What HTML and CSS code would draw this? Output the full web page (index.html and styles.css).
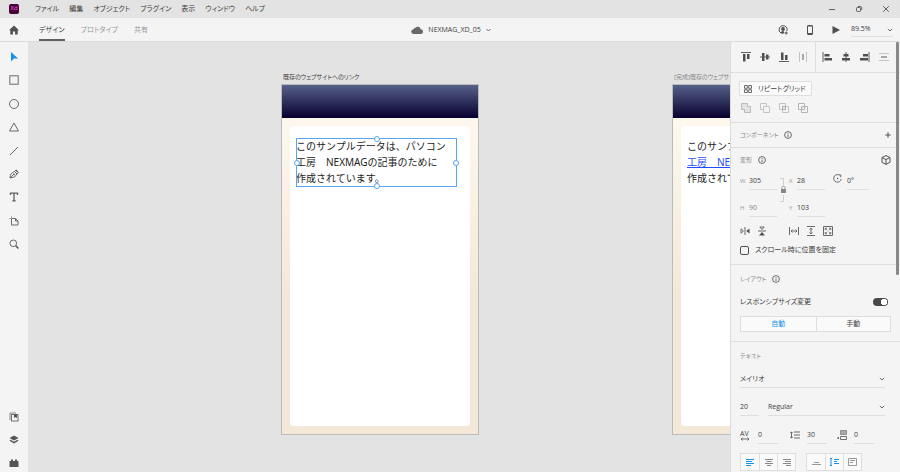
FILE: index.html
```html
<!DOCTYPE html>
<html lang="ja">
<head>
    <meta charset="UTF-8">
    <meta name="viewport" content="width=device-width, initial-scale=1.0">
    <title>NEXMAG_XD_05</title>
    <link rel="stylesheet" href="styles.css">
</head>
<body>
    <header class="titlebar">
        <span class="logo">Xd</span>
        <nav class="menu">
            <a href="#">ファイル</a>
            <a href="#">編集</a>
            <a href="#">オブジェクト</a>
            <a href="#">プラグイン</a>
            <a href="#">表示</a>
            <a href="#">ウィンドウ</a>
            <a href="#">ヘルプ</a>
        </nav>
        <div class="window-buttons">
            <button aria-label="最小化"><svg width="8" height="8" viewBox="0 0 8 8"><path d="M1 4.500h6"/></svg></button>
            <button aria-label="元に戻す"><svg width="8" height="8" viewBox="0 0 8 8"><rect x="1.500" y="2.500" width="4" height="4" rx=".8"/><path d="M3 1.500h2.500q1.200 0 1.200 1.200V5"/></svg></button>
            <button aria-label="閉じる"><svg width="8" height="8" viewBox="0 0 8 8"><path d="M1.200 1.200l5.600 5.600M6.800 1.200L1.200 6.800"/></svg></button>
        </div>
    </header>

    <div class="appbar">
        <a class="home" href="#" aria-label="ホーム"><svg width="10" height="10" viewBox="0 0 10 10"><path d="M5 .6L0 5.200h1.300V9.400h2.600V6.400h2.200v3h2.600V5.200H10z" fill="#505050"/></svg></a>
        <nav class="tabs">
            <a class="tab active" href="#">デザイン</a>
            <a class="tab" href="#">プロトタイプ</a>
            <a class="tab" href="#">共有</a>
        </nav>
        <button class="document">
            <svg width="12" height="8" viewBox="0 0 12 8"><path d="M2.600 8a2.300 2.300 0 0 1-.2-4.600A2 2 0 0 1 4.300 2 3 3 0 0 1 9.700 3.200 2.400 2.400 0 0 1 9.600 8z" fill="#686868"/></svg>
            <span>NEXMAG_XD_05</span>
            <svg width="5" height="4" viewBox="0 0 5 4"><path class="line" d="M.5 1l2 2 2-2"/></svg>
        </button>
        <div class="actions">
            <button aria-label="招待"><svg width="10" height="10" viewBox="0 0 10 10"><path d="M3.200 8.200A4 4 0 1 1 8.800 6" fill="none" stroke="#505050"/><circle cx="5" cy="4" r="1.900" fill="#505050"/><path d="M2.200 7.800q2.600-3.200 4.200-.6L5 9z" fill="#505050"/><path d="M8.200 6.500v3M6.700 8h3" stroke="#505050"/></svg></button>
            <button aria-label="モバイルプレビュー"><svg width="6" height="10" viewBox="0 0 6 10"><path d="M1 .5h4q.5 0 .5.500v8q0 .5-.5.500H1q-.5 0-.5-.5V1Q.5.500 1 .5z" fill="none" stroke="#505050"/><path d="M1 1h4M1 8.500h4" stroke="#505050"/></svg></button>
            <button aria-label="プレビュー"><svg width="8" height="8" viewBox="0 0 8 8"><path d="M.5 0L8 4 .5 8z" fill="#505050"/></svg></button>
            <div class="dropdown zoom">
                <select aria-label="ズーム"><option>89.5%</option><option>100%</option></select>
                <svg width="6" height="4" viewBox="0 0 6 4"><path class="line" d="M.8.800L3 3 5.200.8"/></svg>
            </div>
        </div>
    </div>

    <main class="workspace">
        <aside class="tools">
            <div class="tool-group drawing">
                <button aria-label="選択"><svg width="10" height="10" viewBox="0 0 10 10"><path d="M2 0l7 6.500H5L2 9.500z" fill="#1592e6"/></svg></button>
                <button aria-label="長方形"><svg width="10" height="10" viewBox="0 0 10 10"><rect class="line" x=".8" y=".8" width="8.400" height="8.400"/></svg></button>
                <button aria-label="楕円形"><svg width="10" height="10" viewBox="0 0 10 10"><circle class="line" cx="5" cy="5" r="4.500"/></svg></button>
                <button aria-label="多角形"><svg width="10" height="10" viewBox="0 0 10 10"><path class="line" d="M5 1l4.500 8h-9z"/></svg></button>
                <button aria-label="線"><svg width="10" height="10" viewBox="0 0 10 10"><path class="line" d="M1 9l8-8"/></svg></button>
                <button aria-label="ペン"><svg width="10" height="10" viewBox="0 0 10 10"><path class="line" d="M1 9q0-5 4.500-6.500L8 5Q6.500 9 1 9zM1 9l3.500-3.500M5.500 2.500L7 1l2.500 2.500L8 5"/><path d="M6.500 1.500l2 2 1 0L7.500.5z" fill="#505050"/><circle cx="5" cy="5.300" r=".9" fill="#505050"/></svg></button>
                <button aria-label="テキスト"><svg width="10" height="10" viewBox="0 0 10 10"><path d="M1.500 3V1.200h7V3M5 1.200v7.600M3.300 8.800h3.400" fill="none" stroke="#606060" stroke-width="1.300"/></svg></button>
                <button aria-label="アートボード"><svg width="10" height="10" viewBox="0 0 10 10"><path class="line" d="M2.500 2.500V9H9V5L6.500 2.500zM6.500 2.500V5H9"/><path d="M0 2.500h2.500V0" fill="none" stroke="#aaa"/></svg></button>
                <button aria-label="ズーム"><svg width="10" height="10" viewBox="0 0 10 10"><circle class="line" cx="4.300" cy="4.300" r="3.300"/><path d="M6.800 6.800L9.400 9.400" stroke="#505050" stroke-width="1.400"/></svg></button>
            </div>
            <div class="tool-group">
                <button aria-label="ライブラリ"><svg width="10" height="10" viewBox="0 0 10 10"><path d="M1 8V1h6" fill="none" stroke="#888"/><rect x="2.500" y="2.500" width="6.500" height="6.500" fill="none" stroke="#707070"/><path d="M5 2.500h3V6L6.500 5 5 6z" fill="#505050"/></svg></button>
                <button aria-label="レイヤー"><svg width="10" height="10" viewBox="0 0 10 10"><path d="M5 .5L9.500 3 5 5.500.5 3zM1.500 4.800L5 6.700l3.500-1.900 1 .9L5 8.600.5 5.700z" fill="#555"/></svg></button>
                <button aria-label="プラグイン"><svg width="10" height="10" viewBox="0 0 10 10"><path d="M.5 9V3H2V1.500h2V3h2V1.500h2V3h1.500v6z" fill="#555"/></svg></button>
            </div>
        </aside>

        <section class="canvas">
            <article class="artboard first">
                <h2 class="artboard-name">既存のウェブサイトへのリンク</h2>
                <div class="hero"></div>
                <div class="page">
                    <p>このサンプルデータは、パソコン<br>工房　NEXMAGの記事のために<br>作成されています。</p>
                    <div class="selection"><i class="handle top"></i><i class="handle right"></i><i class="handle bottom"></i><i class="handle left"></i></div>
                </div>
            </article>
            <article class="artboard second">
                <h2 class="artboard-name">[完成]既存のウェブサイトへのリンク</h2>
                <div class="hero"></div>
                <div class="page">
                    <p>このサンプルデータは、パソコン<br><a href="#">工房　NEXMAG</a>の記事のために<br>作成されています。</p>
                </div>
            </article>
        </section>

        <aside class="inspector">
            <div class="align">
                <div class="align-group">
                    <button aria-label="上揃え"><svg width="10" height="10" viewBox="0 0 10 10"><path d="M0 .5h10" stroke="#606060"/><path d="M2 2h2.500v7.500H2zM6 2h2.500v5H6z" fill="#505050"/></svg></button>
                    <button aria-label="中央揃え（垂直方向）"><svg width="10" height="10" viewBox="0 0 10 10"><path d="M0 5h10" stroke="#606060"/><path d="M2 1h2.500v8H2zM6 2.500h2.500v5H6z" fill="#505050"/></svg></button>
                    <button aria-label="下揃え"><svg width="10" height="10" viewBox="0 0 10 10"><path d="M0 9.500h10" stroke="#606060"/><path d="M2 .5h2.500V8H2zM6 3h2.500v5H6z" fill="#505050"/></svg></button>
                    <button aria-label="水平方向に分布" disabled><svg width="10" height="10" viewBox="0 0 10 10"><path d="M1.500 0v10M8.500 0v10" stroke="#c4c4c4"/><path d="M4 2h2v6H4z" fill="#aaa"/></svg></button>
                </div>
                <div class="align-group">
                    <button aria-label="左揃え"><svg width="10" height="10" viewBox="0 0 10 10"><path d="M1 0v10" stroke="#606060"/><path d="M2.500 2h5v2.500h-5zM2.500 6H10v2.500H2.500z" fill="#505050"/></svg></button>
                    <button aria-label="中央揃え（水平方向）"><svg width="10" height="10" viewBox="0 0 10 10"><path d="M5 0v10" stroke="#606060"/><path d="M2.500 2h5v2.500h-5zM1 6h8v2.500H1z" fill="#505050"/></svg></button>
                    <button aria-label="右揃え"><svg width="10" height="10" viewBox="0 0 10 10"><path d="M9 0v10" stroke="#606060"/><path d="M3 2h5v2.500H3zM0 6h8v2.500H0z" fill="#505050"/></svg></button>
                    <button aria-label="垂直方向に分布" disabled><svg width="10" height="10" viewBox="0 0 10 10"><path d="M0 1.500h10M0 8.500h10" stroke="#c4c4c4"/><path d="M2 4h6v2H2z" fill="#aaa"/></svg></button>
                </div>
            </div>

            <div class="section repeat">
                <button class="repeat-button"><svg width="8" height="8" viewBox="0 0 8 8"><path class="line" d="M.5.500h2.800v2.800H.5zM4.700.500h2.800v2.800H4.700zM.5 4.700h2.800v2.800H.5zM4.700 4.700h2.800v2.800H4.700z"/></svg>リピートグリッド</button>
                <div class="boolean">
                    <button aria-label="合体" disabled><svg width="10" height="10" viewBox="0 0 10 10"><path d="M.5.500h6v3h3v6h-6v-3h-3z" fill="#e2e2e2" stroke="#bbb"/></svg></button>
                    <button aria-label="前面オブジェクトで型抜き" disabled><svg width="10" height="10" viewBox="0 0 10 10"><path d="M3.500 6.500h-3v-6h6v3M3.500 3.500h6v6h-6z" fill="none" stroke="#c4c4c4"/></svg></button>
                    <button aria-label="交差" disabled><svg width="10" height="10" viewBox="0 0 10 10"><path d="M.5.500h6v6h-6zM3.500 3.500h6v6h-6z" fill="none" stroke="#c4c4c4"/><path d="M3.500 3.500h3v3h-3z" fill="#eee" stroke="#aaa"/></svg></button>
                    <button aria-label="中マド" disabled><svg width="10" height="10" viewBox="0 0 10 10"><path d="M.5.500h6v6h-6zM3.500 3.500h6v6h-6z" fill="none" stroke="#b4b4b4"/><path d="M4.500 4.500h1v1h-1z" fill="#ccc"/></svg></button>
                </div>
            </div>

            <div class="section component">
                <h3>コンポーネント <svg width="8" height="8" viewBox="0 0 8 8"><circle class="line" cx="4" cy="4" r="3.400"/><path class="line" d="M4 3.500V6M4 2v.8"/></svg></h3>
                <button aria-label="コンポーネントを追加"><svg width="6" height="6" viewBox="0 0 6 6"><path d="M3 .3v5.400M.3 3h5.400" stroke="#505050"/></svg></button>
            </div>

            <div class="section transform">
                <div class="heading">
                    <h3>変形 <svg width="8" height="8" viewBox="0 0 8 8"><circle class="line" cx="4" cy="4" r="3.400"/><path class="line" d="M4 3.500V6M4 2v.8"/></svg></h3>
                    <button aria-label="3D変形"><svg width="10" height="10" viewBox="0 0 10 10"><path d="M5 .6l4 1.900v4.800L5 9.400 1 7.300V2.500zM1 2.500l4 2.100 4-2.100M5 4.600v4.800" fill="none" stroke="#505050"/></svg></button>
                </div>
                <div class="fields">
                    <label for="w">W</label><input id="w" value="305">
                    <button class="lock" aria-label="縦横比を固定"><svg width="7" height="26" viewBox="0 0 7 26"><path d="M0 1.500h3.500V8M0 24.500h3.500V18" fill="none" stroke="#d0d0d0"/><path d="M1 12h5v4H1z" fill="#888"/><path d="M2 12v-1.500q0-1.200 1.500-1.200T5 10.500V12" fill="none" stroke="#999"/></svg></button>
                    <label for="x">X</label><input id="x" value="28">
                    <label class="rotate" for="r" aria-label="回転"><svg width="9" height="9" viewBox="0 0 9 9"><path class="line" d="M6.200 1A3.800 3.800 0 1 0 8.200 5M6 .8l2 .4-.4 2"/><circle cx="4.500" cy="4.500" r=".7" fill="#505050"/></svg></label><input id="r" value="0°">
                    <label for="h">H</label><input class="muted" id="h" value="90">
                    <label for="y">Y</label><input id="y" value="103">
                </div>
                <div class="icon-row">
                    <button aria-label="水平方向に反転"><svg width="10" height="8" viewBox="0 0 10 8"><path class="line" d="M5 0v8M1 1.800L3.500 4 1 6.200z"/><path d="M9.500 1.500L6.200 4l3.300 2.500z" fill="#505050"/></svg></button>
                    <button aria-label="垂直方向に反転"><svg width="8" height="10" viewBox="0 0 8 10"><path class="line" d="M0 5h8M1.800 1L4 3.500 6.200 1z"/><path d="M1 9.500L4 6l3 3.500z" fill="#505050"/></svg></button>
                    <button class="resize-start" aria-label="幅"><svg width="10" height="8" viewBox="0 0 10 8"><path class="line" d="M.5 0v8M9.500 0v8M2 4h6M3.500 2.500L2 4l1.500 1.500M6.500 2.500L8 4 6.500 5.500"/></svg></button>
                    <button aria-label="高さ"><svg width="8" height="10" viewBox="0 0 8 10"><path class="line" d="M0 .5h8M0 9.500h8M4 2v6M2.500 3.500L4 2l1.500 1.500M2.500 6.500L4 8l1.500-1.500"/></svg></button>
                    <button aria-label="固定サイズ"><svg width="10" height="10" viewBox="0 0 10 10"><path class="line" d="M.5.500h9v9h-9z"/><path d="M2.200 4V2.200H4M6 2.200h1.800V4M7.800 6v1.800H6M4 7.800H2.200V6M2.200 2.200l2 2M7.800 2.200l-2 2M7.800 7.800l-2-2M2.200 7.800l2-2" fill="none" stroke="#606060" stroke-width=".8"/></svg></button>
                </div>
                <label class="check"><input type="checkbox">スクロール時に位置を固定</label>
            </div>

            <div class="section layout">
                <h3>レイアウト <svg width="8" height="8" viewBox="0 0 8 8"><circle class="line" cx="4" cy="4" r="3.400"/><path class="line" d="M4 3.500V6M4 2v.8"/></svg></h3>
                <label class="switch">レスポンシブサイズ変更<input type="checkbox" checked></label>
                <div class="segmented"><button class="on">自動</button><button>手動</button></div>
            </div>

            <div class="section text">
                <h3>テキスト</h3>
                <div class="dropdown">
                    <select aria-label="フォント"><option>メイリオ</option></select>
                    <svg width="6" height="4" viewBox="0 0 6 4"><path class="line" d="M.8.800L3 3 5.200.8"/></svg>
                </div>
                <div class="font-row">
                    <input aria-label="フォントサイズ" value="20">
                    <div class="dropdown">
                        <select aria-label="フォントの太さ"><option>Regular</option><option>Bold</option></select>
                        <svg width="6" height="4" viewBox="0 0 6 4"><path class="line" d="M.8.800L3 3 5.200.8"/></svg>
                    </div>
                </div>
                <div class="spacing">
                    <label class="tracking" for="tracking" aria-label="文字の間隔"><span>AV</span><svg width="10" height="4" viewBox="0 0 10 4"><path class="line" d="M1 2h8M2.500.5L1 2l1.500 1.500M7.500.5L9 2 7.500 3.500"/></svg></label><input id="tracking" value="0">
                    <label for="leading" aria-label="行送り"><svg width="10" height="8" viewBox="0 0 10 8"><path class="line" d="M4 1h6M4 4h6M4 7h6M1.500 1v6M.2 2.200L1.500.8l1.300 1.400M.2 5.800l1.300 1.400 1.300-1.400"/></svg></label><input id="leading" value="30">
                    <label for="paragraph" aria-label="段落間隔"><svg width="10" height="10" viewBox="0 0 10 10"><path d="M3.500.500h6v4h-6z" fill="#aaa" stroke="#909090"/><path d="M3.500 6.500h6v3h-6z" fill="none" stroke="#707070"/><path class="line" d="M0 8h2M1 7l1 1-1 1"/></svg></label><input id="paragraph" value="0">
                </div>
                <div class="text-align">
                    <div class="button-set">
                        <button aria-label="左揃え"><svg width="8" height="7" viewBox="0 0 8 7"><path d="M0 .5h8M0 2.500h6M0 4.500h8M0 6.500h5" stroke="#1592e6"/></svg></button>
                        <button aria-label="中央揃え"><svg width="8" height="7" viewBox="0 0 8 7"><path d="M0 .5h8M1.500 2.500h5M0 4.500h8M2 6.500h4" stroke="#888"/></svg></button>
                        <button aria-label="右揃え"><svg width="8" height="7" viewBox="0 0 8 7"><path d="M0 .5h8M2 2.500h6M0 4.500h8M3 6.500h5" stroke="#888"/></svg></button>
                    </div>
                    <div class="button-set">
                        <button aria-label="ポイントテキスト"><svg width="9" height="8" viewBox="0 0 9 8"><path d="M2 4.500h5M0 6.500h9" stroke="#999"/></svg></button>
                        <button aria-label="高さの自動調整"><svg width="9" height="8" viewBox="0 0 9 8"><path d="M0 .5h2M1 .5v7M0 7.500h2" stroke="#1592e6" fill="none"/><path d="M4 1.500h5M4 3.500h3M4 5.500h5" stroke="#1592e6"/></svg></button>
                        <button aria-label="固定サイズ"><svg width="9" height="8" viewBox="0 0 9 8"><path d="M.5.500h8v7h-8zM2 2.500h5M2 4.500h3" fill="none" stroke="#999"/></svg></button>
                    </div>
                </div>
            </div>
        </aside>
    </main>
</body>
</html>
```

FILE: styles.css
```css
* {
    box-sizing: border-box;
}
body {
    display: flex;
    flex-direction: column;
    height: 100vh;
    margin: 0;
    overflow: hidden;
    background: #e3e3e3;
    color: #404040;
    font-family: "Open Sans", "Noto Sans CJK JP", sans-serif;
    font-size: 7px;
    line-height: 10px;
    font-feature-settings: "palt";
}
a {
    color: inherit;
    text-decoration: none;
}
button {
    display: flex;
    align-items: center;
    justify-content: center;
    margin: 0;
    padding: 0;
    border: 0;
    background: none;
    color: inherit;
    font: inherit;
    font-feature-settings: inherit;
}
input, select {
    min-width: 0;
    margin: 0;
    padding: 0;
    border: 0;
    border-bottom: 1px solid #dedede;
    border-radius: 0;
    background: none;
    color: #404040;
    font: inherit;
    font-feature-settings: inherit;
}
select {
    appearance: none;
    width: 100%;
}
svg {
    display: block;
    flex: none;
}
.line {
    fill: none;
    stroke: #6a6a6a;
    stroke-width: 1;
}

/* top bars */
.titlebar {
    display: flex;
    align-items: center;
    flex: none;
    height: 18px;
    padding: 0 10px 0 9px;
}
.logo {
    width: 10px;
    height: 10px;
    border-radius: 2px;
    background: #470137;
    color: #ff61f6;
    font-size: 6px;
    line-height: 9px;
    text-align: center;
}
.menu {
    display: flex;
    gap: 10px;
    margin-left: 16px;
}
.window-buttons {
    display: flex;
    gap: 19px;
    margin-left: auto;
}
.window-buttons svg {
    fill: none;
    stroke: #606060;
}
.appbar {
    display: grid;
    grid-template-columns: 1fr auto 1fr;
    flex: none;
    align-items: center;
    height: 24px;
    padding: 0 7px 0 9px;
    border-bottom: 1px solid #dcdcdc;
    background: #f4f4f4;
}
.home {
    grid-area: 1 / 1;
}
.tabs {
    display: flex;
    grid-area: 1 / 1;
    gap: 16px;
    margin-left: 30px;
}
.tab {
    height: 23px;
    color: #999;
    line-height: 24px;
}
.tab.active {
    border-bottom: 2px solid #606060;
    color: #404040;
}
.document {
    gap: 5px;
}
.actions {
    display: flex;
    align-items: center;
    justify-content: flex-end;
    gap: 19px;
}
.dropdown {
    display: grid;
    align-items: center;
}
.dropdown select, .dropdown svg {
    grid-area: 1 / 1;
}
.dropdown svg {
    justify-self: end;
    pointer-events: none;
}
.zoom {
    width: 42px;
    margin-left: -8px;
}
.zoom select {
    height: 14px;
}

/* left toolbar */
.workspace {
    display: flex;
    flex: 1;
    min-height: 0;
}
.tools {
    display: flex;
    flex-direction: column;
    justify-content: space-between;
    flex: none;
    width: 28px;
    padding: 10px 0 4px;
    background: #f4f4f4;
}
.tool-group {
    display: flex;
    flex-direction: column;
    align-items: center;
    justify-content: space-between;
    gap: 13px;
}
.drawing {
    height: 197px;
}
.tool-group button {
    width: 18px;
    height: 10px;
}

/* artboards */
.canvas {
    flex: 1;
    min-width: 0;
    position: relative;
    overflow: hidden;
}
.artboard {
    position: absolute;
    top: 42px;
    width: 198px;
    height: 351px;
    border: 1px solid #bbb;
    background: linear-gradient(#fffaf2, #f4e9d8 60%);
}
.first {
    left: 253px;
}
.second {
    left: 644px;
}
.artboard-name {
    position: absolute;
    bottom: 100%;
    left: 1px;
    margin: 0 0 3px;
    font-size: 6px;
    font-weight: 400;
    line-height: 10px;
    white-space: nowrap;
}
.second .artboard-name {
    color: #888;
}
.hero {
    height: 33px;
    background: linear-gradient(#56618a, #08002e);
}
.page {
    height: 300px;
    margin: 8px;
    padding: 12px 6px;
    border-radius: 4px;
    background: #fff;
    position: relative;
}
.page p {
    margin: 0;
    color: #222;
    font-family: "Noto Sans", "Noto Sans CJK JP", sans-serif;
    font-feature-settings: normal;
    font-size: 10px;
    line-height: 16px;
    white-space: nowrap;
}
.page a {
    color: #1f4dff;
    text-decoration: underline;
}
.selection {
    position: absolute;
    top: 12px;
    left: 6px;
    width: 161px;
    height: 49px;
    border: 1px solid #57a5ee;
}
.handle {
    position: absolute;
    width: 6px;
    height: 6px;
    border: 1px solid #57a5ee;
    border-radius: 50%;
    background: #fff;
    transform: translate(-50%, -50%);
}
.top {
    top: 0;
    left: 50%;
}
.right {
    top: 50%;
    left: 100%;
}
.bottom {
    top: 100%;
    left: 50%;
}
.left {
    top: 50%;
    left: 0;
}

/* property inspector */
.inspector {
    flex: none;
    width: 170px;
    border-left: 1px solid #dcdcdc;
    background: #f4f4f4;
    position: relative;
    overflow: hidden;
}
.inspector::after {
    content: "";
    position: absolute;
    top: 0;
    right: 1px;
    width: 3px;
    height: 233px;
    border-radius: 1px;
    background: #888;
}
.align {
    display: flex;
    height: 31px;
    border-bottom: 1px solid #dedede;
}
.align-group {
    display: flex;
    align-items: center;
    gap: 9px;
    padding: 0 7px 0 10px;
}
.align-group + .align-group {
    border-left: 1px solid #dedede;
    padding-left: 6px;
}
.section {
    padding: 0 9px;
    border-bottom: 1px solid #dedede;
}
.section h3 {
    display: flex;
    align-items: center;
    gap: 6px;
    margin: 0;
    color: #888;
    font-size: 6px;
    font-weight: 400;
    line-height: 10px;
}
.repeat {
    height: 50px;
    padding: 8px;
}
.repeat-button {
    gap: 6px;
    height: 15px;
    padding: 0 5px 0 4px;
    border: 1px solid #dedede;
    border-radius: 1px;
    background: #fafafa;
}
.boolean {
    display: flex;
    gap: 9px;
    padding: 7px 2px;
}
.component, .heading {
    display: flex;
    align-items: center;
    justify-content: space-between;
}
.component {
    height: 25px;
}
.transform {
    height: 117px;
    padding-top: 7px;
}
.heading {
    height: 10px;
}
.fields {
    display: grid;
    grid-template-columns: 9px 28px 12px 8px 28px 22px 22px;
    grid-template-rows: 17px 17px;
    row-gap: 10px;
    margin-top: 8px;
}
.fields label {
    color: #999;
    font-size: 6px;
    line-height: 17px;
}
.fields .lock {
    grid-area: 1 / 3 / 3 / 4;
    align-self: start;
    padding-top: 4px;
}
.fields label[for="h"] {
    grid-column: 1;
}
.fields .rotate {
    padding: 1px 0 0 8px;
}
.fields .muted {
    color: #888;
}
.icon-row {
    display: flex;
    align-items: center;
    gap: 8px;
    height: 10px;
    margin-top: 9px;
}
.icon-row .resize-start {
    margin-left: 15px;
}
.check {
    display: flex;
    align-items: center;
    gap: 6px;
    margin-top: 9px;
}
.check input {
    appearance: none;
    width: 9px;
    height: 9px;
    border: 1px solid #505050;
    border-radius: 2px;
}
.layout {
    height: 77px;
    padding-top: 9px;
}
.switch {
    display: flex;
    align-items: center;
    justify-content: space-between;
    margin-top: 13px;
    padding-right: 3px;
}
.switch input {
    appearance: none;
    width: 15px;
    height: 8px;
    border: 0;
    border-radius: 4px;
    background: radial-gradient(circle at 11px 4px, #fff 3px, #484848 3px);
}
.segmented {
    display: grid;
    grid-template-columns: 1fr 1fr;
    height: 16px;
    margin-top: 9px;
    border: 1px solid #dedede;
    background: #fafafa;
}
.segmented button + button, .button-set button + button {
    border-left: 1px solid #dedede;
}
.segmented .on {
    color: #1592e6;
}
.text {
    padding-top: 9px;
    padding-right: 15px;
    border: 0;
}
.text select, .text input {
    height: 18px;
}
.text > .dropdown {
    margin-top: 9px;
}
.font-row {
    display: grid;
    grid-template-columns: 19px 1fr;
    gap: 9px;
    margin-top: 10px;
}
.spacing {
    display: grid;
    grid-template-columns: 18px 20px 12px 17px 20px 10px 17px 20px;
    align-items: center;
    margin-top: 10px;
}
.spacing #tracking {
    grid-column: 2;
}
.spacing label[for="leading"] {
    grid-column: 4;
}
.spacing label[for="paragraph"] {
    grid-column: 7;
}
.tracking span {
    display: block;
    line-height: 7px;
}
.text-align {
    display: flex;
    gap: 10px;
    margin-top: 9px;
}
.button-set {
    display: flex;
    height: 18px;
    border: 1px solid #dedede;
    background: #fafafa;
}
.button-set button {
    width: 18px;
}
```
